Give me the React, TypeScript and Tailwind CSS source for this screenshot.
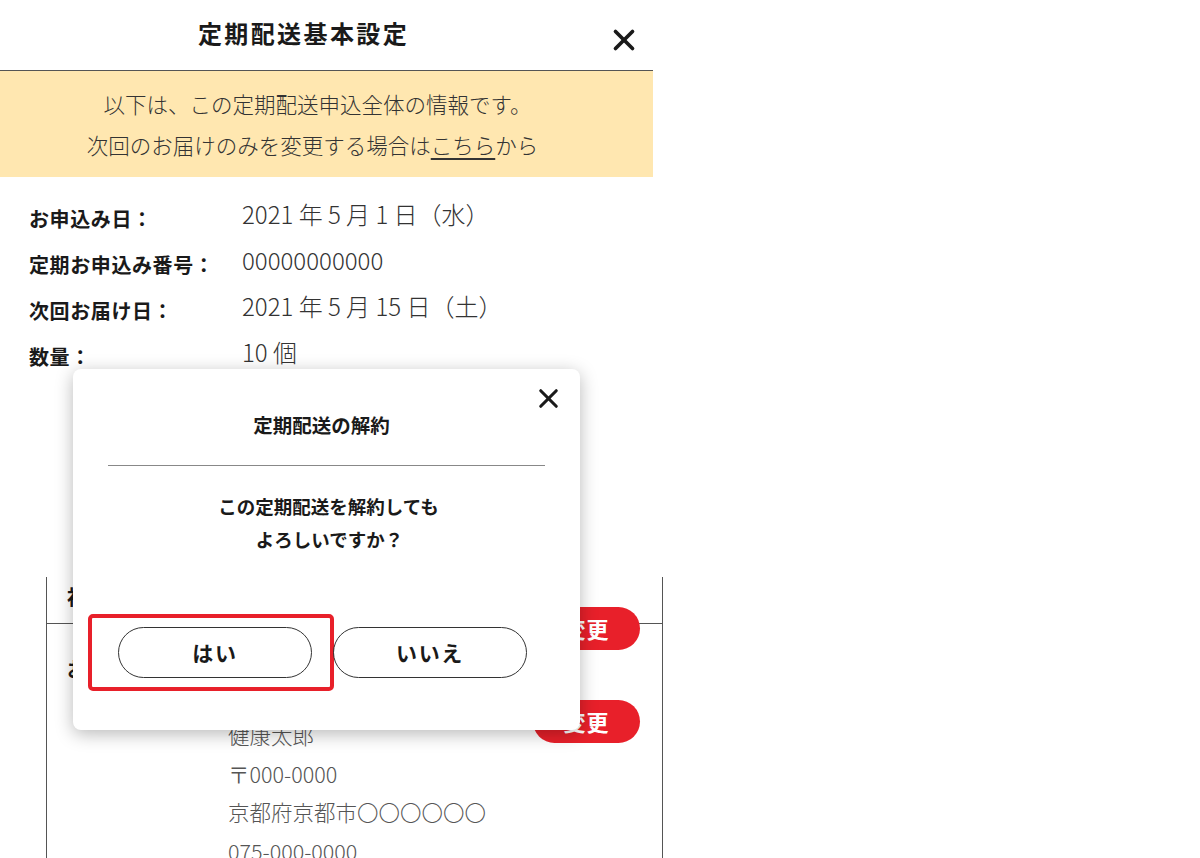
import { X } from 'lucide-react'

const font = { fontFamily: '"Noto Sans CJK JP", "Noto Sans", sans-serif' }

const rows = [
  { label: 'お申込み日：', value: '2021 年 5 月 1 日（水）' },
  { label: '定期お申込み番号：', value: '00000000000' },
  { label: '次回お届け日：', value: '2021 年 5 月 15 日（土）' },
  { label: '数量：', value: '10 個' },
]

function ChangeButton() {
  return (
    <button className="w-[107px] h-[43px] rounded-full bg-[#E8202A] text-white text-[22px] font-bold tracking-[0.04em]">
      変更
    </button>
  )
}

export default function App() {
  return (
    <div style={font} className="relative w-[1200px] h-[858px] overflow-hidden bg-white text-[#1a1a1a]">
      <div className="w-[653px]">
        {/* header */}
        <div className="relative h-[71px] flex items-center justify-center border-b border-[#555]">
          <h1 className="text-[24px] font-bold tracking-[0.1em] -ml-[46px] -mt-[4px]">定期配送基本設定</h1>
          <X className="absolute right-[12px] top-[23px] w-[34px] h-[34px]" strokeWidth={2.6} />
        </div>

        {/* notice */}
        <div className="h-[106px] bg-[#FFE7B0] flex flex-col items-center justify-center text-[21.5px] leading-[41px] font-light text-[#333]">
          <p className="-ml-[18px]">以下は、この定期配送申込全体の情報です。</p>
          <p className="-ml-[28px]">
            次回のお届けのみを変更する場合は<span className="underline underline-offset-4">こちら</span>から
          </p>
        </div>

        {/* info */}
        <div className="pt-[16px] pl-[29px]">
          {rows.map((r, i) => (
            <div key={i} className="flex h-[46px] items-center">
              <span className="w-[213px] text-[20px] font-bold tracking-[0.03em] pt-[6px]">{r.label}</span>
              <span className="text-[24px] font-light text-[#333] -mt-[5px]">{r.value}</span>
            </div>
          ))}
        </div>
      </div>

      {/* lower box, partly hidden */}
      <div className="mt-[200px] ml-[46px] w-[617px] border-x border-[#555]">
        <div className="relative h-[47px] border-b border-[#555] flex justify-between">
          <span className="pl-[20px] pt-[5px] text-[20px] font-bold">初回お届け</span>
          <div className="mr-[22px] mt-[30px] z-10">
            <ChangeButton />
          </div>
        </div>
        <div className="flex justify-between">
          <span className="pl-[20px] pt-[30px] text-[20px] font-bold">お届け先</span>
          <div className="mr-[22px] mt-[76px]">
            <ChangeButton />
          </div>
        </div>
        <div className="-mt-[27px] pl-[181px] text-[21.5px] leading-[38.5px] font-light text-[#555]">
          <p>健康太郎</p>
          <p>〒000-0000</p>
          <p>京都府京都市〇〇〇〇〇〇</p>
          <p>075-000-0000</p>
        </div>
      </div>

      {/* modal */}
      <div className="absolute z-20 left-[73px] top-[369px] w-[507px] h-[361px] rounded-[8px] bg-white shadow-[0_4px_18px_rgba(0,0,0,0.28)]">
        <X className="absolute right-[16px] top-[14px] w-[31px] h-[31px]" strokeWidth={2.4} />
        <div className="pt-[41px] text-center text-[19.5px] font-bold -ml-[10px]">定期配送の解約</div>
        <div className="mt-[26px] mx-[35px] border-t border-[#888]" />
        <div className="mt-[24px] text-center text-[18.5px] font-bold leading-[33px]">
          <p className="ml-[4px]">この定期配送を解約しても</p>
          <p className="ml-[6px]">よろしいですか？</p>
        </div>
        <div className="mt-[58px] ml-[15px] flex items-center">
          <div className="w-[246px] h-[77px] rounded-[5px] border-[4px] border-[#E8202A] flex items-center pl-[26px]">
            <button className="w-[194px] h-[51px] rounded-full border border-[#333] text-[21px] font-bold tracking-[0.08em]">
              はい
            </button>
          </div>
          <button className="-ml-[1px] w-[194px] h-[51px] rounded-full border border-[#333] text-[21px] font-bold tracking-[0.08em]">
            いいえ
          </button>
        </div>
      </div>
    </div>
  )
}
